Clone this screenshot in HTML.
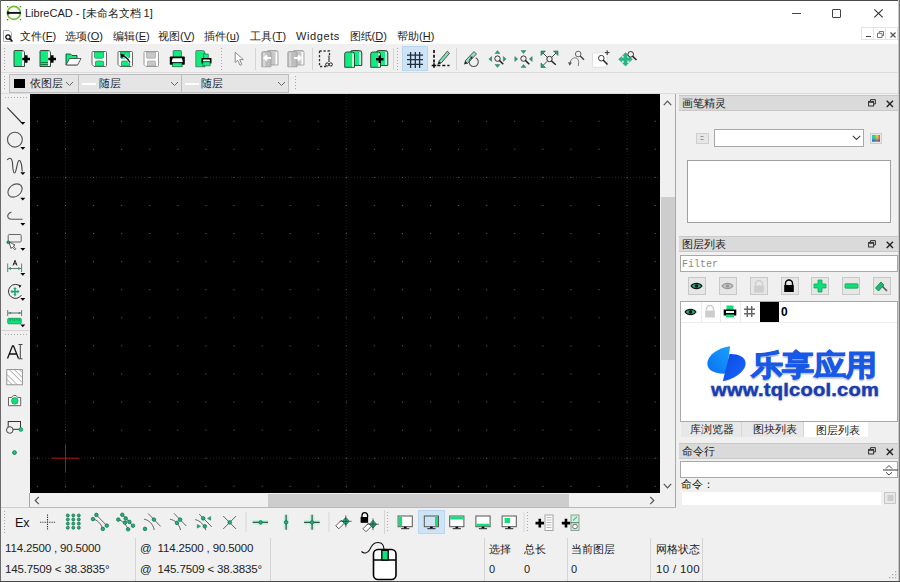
<!DOCTYPE html>
<html><head><meta charset="utf-8">
<style>
*{box-sizing:border-box}
html,body{margin:0;padding:0}
body{width:900px;height:582px;position:relative;overflow:hidden;background:#f0f0f0;font-family:"Liberation Sans",sans-serif;color:#1a1a1a}
.a{position:absolute}
.t{position:absolute;white-space:nowrap;line-height:1}
svg{position:absolute;overflow:visible}
</style></head><body>
<div class="a" style="left:0px;top:0px;width:900px;height:44px;background:#fff;"></div><svg style="left:0px;top:0px;" width="28" height="26" viewBox="0 0 28 26"><circle cx="13.9" cy="12.9" r="6.5" fill="none" stroke="#6cc230" stroke-width="1.7"/><path d="M7.2 12.9H20.8" stroke="#111" stroke-width="1.9"/><rect x="7" y="11.4" width="2.2" height="3" fill="#111"/><rect x="7" y="6" width="1.3" height="1.3" fill="#4a7a3a"/><rect x="19.8" y="6" width="1.3" height="1.3" fill="#4a7a3a"/><rect x="7" y="19" width="1.3" height="1.3" fill="#4a7a3a"/><rect x="19.8" y="19" width="1.3" height="1.3" fill="#4a7a3a"/></svg><div class="t" style="left:25px;top:7.5px;font-size:11px;color:#222;">LibreCAD - [未命名文档 1]</div><div class="a" style="left:792px;top:12.5px;width:8.5px;height:1.3px;background:#444;"></div><div class="a" style="left:832.3px;top:9px;width:9px;height:8.6px;background:transparent;border:1.1px solid #444;border-radius:1px"></div><svg style="left:874px;top:9px;" width="9" height="9" viewBox="0 0 9 9"><path d="M0.3 0.3L8.7 8.3M8.7 0.3L0.3 8.3" stroke="#333" stroke-width="1.1"/></svg><div class="a" style="left:2px;top:30px;width:12px;height:13px;background:transparent;"></div><svg style="left:2px;top:30px;" width="14" height="13" viewBox="0 0 14 13"><path d="M1.5 0.5H7L9.5 3V11.5H1.5Z" fill="#fff" stroke="#999" stroke-width="0.8"/><circle cx="6" cy="7" r="2.2" fill="none" stroke="#111" stroke-width="1.3"/><path d="M7.6 8.6L10.5 11.5" stroke="#111" stroke-width="1.6"/></svg><div class="t" style="left:20px;top:31px;font-size:11px;color:#222;">文件(<u>F</u>)</div><div class="t" style="left:65px;top:31px;font-size:11px;color:#222;">选项(<u>O</u>)</div><div class="t" style="left:113px;top:31px;font-size:11px;color:#222;">编辑(<u>E</u>)</div><div class="t" style="left:158px;top:31px;font-size:11px;color:#222;">视图(<u>V</u>)</div><div class="t" style="left:204px;top:31px;font-size:11px;color:#222;">插件(<u>u</u>)</div><div class="t" style="left:250px;top:31px;font-size:11px;color:#222;">工具(<u>T</u>)</div><div class="t" style="left:296px;top:31px;font-size:11px;color:#222;letter-spacing:0.6px;">Widgets</div><div class="t" style="left:349.5px;top:31px;font-size:11px;color:#222;">图纸(<u>D</u>)</div><div class="t" style="left:397px;top:31px;font-size:11px;color:#222;">帮助(<u>H</u>)</div><div class="a" style="left:861px;top:27px;width:12.5px;height:13px;background:#fff;border:1px solid #e3e3e3"></div><div class="a" style="left:873px;top:27px;width:12.5px;height:13px;background:#fff;border:1px solid #e3e3e3"></div><div class="a" style="left:885px;top:27px;width:12.5px;height:13px;background:#fff;border:1px solid #e3e3e3"></div><div class="a" style="left:866px;top:36px;width:5px;height:1.2px;background:#444;"></div><svg style="left:877px;top:30.5px;" width="7" height="7" viewBox="0 0 7 7"><path d="M2.3 2V0.5H6.5V4.7H5M0.5 2.3H5V6.5H0.5Z" fill="none" stroke="#666" stroke-width="0.9"/></svg><svg style="left:889.5px;top:31.5px;" width="6" height="6" viewBox="0 0 6 6"><path d="M0.5 0.5L5.5 5.5M5.5 0.5L0.5 5.5" stroke="#555" stroke-width="1.3"/></svg><div class="a" style="left:5px;top:97px;width:1px;height:1px;background:#a8a8a8;"></div><div class="a" style="left:8px;top:97px;width:1px;height:1px;background:#a8a8a8;"></div><div class="a" style="left:11px;top:97px;width:1px;height:1px;background:#a8a8a8;"></div><div class="a" style="left:14px;top:97px;width:1px;height:1px;background:#a8a8a8;"></div><div class="a" style="left:17px;top:97px;width:1px;height:1px;background:#a8a8a8;"></div><div class="a" style="left:20px;top:97px;width:1px;height:1px;background:#a8a8a8;"></div><div class="a" style="left:23px;top:97px;width:1px;height:1px;background:#a8a8a8;"></div><div class="a" style="left:26px;top:97px;width:1px;height:1px;background:#a8a8a8;"></div><svg style="left:0px;top:100px;" width="30" height="400" viewBox="0 0 30 400"><path d="M7.3 7.6L21.5 22.5" stroke="#333" stroke-width="1.1"/><path d="M20.3 22H25.3L22.8 24.8Z" fill="#000"/><circle cx="14.9" cy="39.7" r="7.4" fill="none" stroke="#555" stroke-width="1.1"/><path d="M20.3 47H25.3L22.8 49.8Z" fill="#000"/><path d="M7.2 60C9 57.5 11.5 57.3 12.3 61.5C13 66 12.5 73 14.5 73C16.5 73 17 61 19 60.5C21 60 22 66 22.2 71.5" fill="none" stroke="#444" stroke-width="1.1"/><path d="M20.3 72.2H25.3L22.8 75.0Z" fill="#000"/><ellipse cx="15" cy="90.5" rx="7.8" ry="5.8" transform="rotate(-38 15 90.5)" fill="none" stroke="#555" stroke-width="1.1"/><path d="M20.3 97.8H25.3L22.8 100.6Z" fill="#000"/><path d="M11.5 112C8.5 113 7 115.5 8 117.5C8.7 119 10 119.2 11.5 119.2H22.5" fill="none" stroke="#555" stroke-width="1.1"/><path d="M20.3 123H25.3L22.8 125.8Z" fill="#000"/><rect x="8.2" y="134.5" width="13" height="7.5" rx="1" fill="none" stroke="#666" stroke-width="1"/><path d="M9 142L11 148.5L12.3 147L14.8 149.8L15.8 148.8L13.3 146L15 145Z" fill="#fff" stroke="#333" stroke-width="0.8"/><circle cx="8.3" cy="142.2" r="1.5" fill="#1a9a6a" stroke="#116644" stroke-width="0.5"/><path d="M20.3 148H25.3L22.8 150.8Z" fill="#000"/><path d="M13 165.5L15 160.3L17 165.5M13.7 163.8H16.3" fill="none" stroke="#222" stroke-width="1"/><path d="M7.7 163.5V172M21.6 163.5V172" stroke="#777" stroke-width="1"/><path d="M8.5 168.5H20.8" stroke="#666" stroke-width="0.9"/><path d="M8 168.5L11 167V170Z M21.2 168.5L18.2 167V170Z" fill="#1e9a6a"/><path d="M20.3 173H25.3L22.8 175.8Z" fill="#000"/><path d="M20.5 186.5A7 7 0 1 0 21.5 195" fill="none" stroke="#333" stroke-width="1"/><path d="M18.5 184.5L21.5 185.5L19.5 188Z" fill="#222"/><path d="M15 187L16.8 189H15.8V190.8H17.6V189.8L19.6 191.6L17.6 193.4V192.4H15.8V194.2H16.8L15 196.2L13.2 194.2H14.2V192.4H12.4V193.4L10.4 191.6L12.4 189.8V190.8H14.2V189H13.2Z" fill="#23a677"/><path d="M20.3 198H25.3L22.8 200.8Z" fill="#000"/><path d="M7.7 210V216M21.6 210V216" stroke="#777" stroke-width="1"/><path d="M8 213H21.3" stroke="#555" stroke-width="0.9"/><circle cx="10.3" cy="213" r="1" fill="#1e9a6a"/><circle cx="19.3" cy="213" r="1" fill="#1e9a6a"/><rect x="7.7" y="218.3" width="13.6" height="5.5" rx="1" fill="#10e07a" stroke="#0a8a4a" stroke-width="0.7"/><path d="M10 219V221M12.3 219V220.5M14.6 219V221M16.9 219V220.5M19.2 219V221" stroke="#0a7a40" stroke-width="0.7"/><path d="M20.3 224.5H25.3L22.8 227.3Z" fill="#000"/><path d="M7.5 258.5L12.5 245.8H13.5L18.5 258.5M9.3 254H16.7" fill="none" stroke="#111" stroke-width="1.3"/><path d="M20.3 244.5V258.8M18.5 244.5H22.5M18.5 258.8H22.5" stroke="#444" stroke-width="1"/><rect x="6.8" y="269.6" width="15.6" height="15.2" fill="#fff" stroke="#8a8a8a" stroke-width="0.9"/><path d="M7 274.5L17.3 284.8M7 279.5L12.3 284.8M9.5 269.8L22.2 282.5M14.5 269.8L22.2 277.5M19.5 269.8L22.2 272.5" stroke="#8a8a8a" stroke-width="0.8"/><path d="M8.5 297.5H11.8L13.5 295.5H16L17.7 297.5H20.7V305.7H8.5Z" fill="#fff" stroke="#555" stroke-width="0.9"/><circle cx="14.8" cy="300.9" r="3.3" fill="#10e07a" stroke="#0a8a4a" stroke-width="0.6"/><rect x="8.2" y="321.5" width="12.3" height="7.8" fill="none" stroke="#333" stroke-width="1"/><circle cx="9.8" cy="330" r="3.3" fill="#f0f0f0" stroke="#333" stroke-width="0.9"/><circle cx="20.8" cy="329.5" r="1.9" fill="#10d07a" stroke="#0a7a4a" stroke-width="0.6"/><circle cx="14.5" cy="352.6" r="1.9" fill="#10d07a" stroke="#0a6a40" stroke-width="0.8"/></svg><div class="a" style="left:1px;top:330px;width:28px;height:1px;background:#d4d4d4;"></div><div class="a" style="left:5px;top:334px;width:1px;height:1px;background:#a8a8a8;"></div><div class="a" style="left:8px;top:334px;width:1px;height:1px;background:#a8a8a8;"></div><div class="a" style="left:11px;top:334px;width:1px;height:1px;background:#a8a8a8;"></div><div class="a" style="left:14px;top:334px;width:1px;height:1px;background:#a8a8a8;"></div><div class="a" style="left:17px;top:334px;width:1px;height:1px;background:#a8a8a8;"></div><div class="a" style="left:20px;top:334px;width:1px;height:1px;background:#a8a8a8;"></div><div class="a" style="left:23px;top:334px;width:1px;height:1px;background:#a8a8a8;"></div><div class="a" style="left:26px;top:334px;width:1px;height:1px;background:#a8a8a8;"></div><div class="a" style="left:0px;top:44px;width:900px;height:29px;background:#f0f0f0;"></div><div class="a" style="left:0px;top:72px;width:900px;height:1px;background:#dcdcdc;"></div><div class="a" style="left:4px;top:48px;width:1px;height:1px;background:#a8a8a8;"></div><div class="a" style="left:4px;top:51px;width:1px;height:1px;background:#a8a8a8;"></div><div class="a" style="left:4px;top:54px;width:1px;height:1px;background:#a8a8a8;"></div><div class="a" style="left:4px;top:57px;width:1px;height:1px;background:#a8a8a8;"></div><div class="a" style="left:4px;top:60px;width:1px;height:1px;background:#a8a8a8;"></div><div class="a" style="left:4px;top:63px;width:1px;height:1px;background:#a8a8a8;"></div><div class="a" style="left:4px;top:66px;width:1px;height:1px;background:#a8a8a8;"></div><div class="a" style="left:4px;top:69px;width:1px;height:1px;background:#a8a8a8;"></div><svg style="left:13px;top:50px;" width="18" height="18" viewBox="0 0 18 18"><path d="M1 1.5Q1 0.5 2 0.5H9Q11.5 0.5 11.5 3V16.5H1Z" fill="#10ec7e" stroke="#333" stroke-width="0.9"/><rect x="9" y="1.5" width="2" height="14.5" fill="#e8fff2"/><path d="M9.3 9H17M13.2 5.3V12.8" stroke="#000" stroke-width="2.7"/></svg><svg style="left:39px;top:50px;" width="18" height="18" viewBox="0 0 18 18"><path d="M1 1.5Q1 0.5 2 0.5H9Q11.5 0.5 11.5 3V16.5H1Z" fill="#10ec7e" stroke="#333" stroke-width="0.9"/><rect x="9" y="1.5" width="2" height="14.5" fill="#e8fff2"/><path d="M1.5 12.5H9M1.5 14.5H9" stroke="#0a7a40" stroke-width="1"/><path d="M9.3 9H17M13.2 5.3V12.8" stroke="#000" stroke-width="2.7"/></svg><svg style="left:65px;top:52px;" width="18" height="15" viewBox="0 0 18 15"><path d="M1 13V2H5.5L7 3.5H12V6.5" fill="#10ec7e" stroke="#222" stroke-width="0.8"/><path d="M1 13L4.5 6.5H16L12.5 13Z" fill="#fff" stroke="#333" stroke-width="0.8"/><path d="M1.5 13.3H12.5" stroke="#888" stroke-width="1.2"/></svg><svg style="left:91px;top:51px;" width="17" height="17" viewBox="0 0 17 17"><path d="M1 1.5Q1 0.5 2 0.5H14.5Q15.5 0.5 15.5 1.5V14.5Q15.5 15.5 14.5 15.5H3L1 13.5Z" fill="#fff" stroke="#666" stroke-width="1"/><path d="M3.5 1H12.5V6Q12.5 7.3 11.2 7.3H4.8Q3.5 7.3 3.5 6Z" fill="#10ec7e" stroke="#0a8040" stroke-width="0.6"/><path d="M4.5 15V11Q4.5 10 5.5 10H11.5Q12.5 10 12.5 11V15Z" fill="#10ec7e" stroke="#0a8040" stroke-width="0.6"/></svg><svg style="left:117px;top:51px;" width="17" height="17" viewBox="0 0 17 17"><path d="M1 1.5Q1 0.5 2 0.5H14.5Q15.5 0.5 15.5 1.5V14.5Q15.5 15.5 14.5 15.5H3L1 13.5Z" fill="#fff" stroke="#666" stroke-width="1"/><path d="M3.5 1H12.5V6Q12.5 7.3 11.2 7.3H4.8Q3.5 7.3 3.5 6Z" fill="#10ec7e" stroke="#0a8040" stroke-width="0.6"/><path d="M4.5 15V11Q4.5 10 5.5 10H11.5Q12.5 10 12.5 11V15Z" fill="#10ec7e" stroke="#0a8040" stroke-width="0.6"/></svg><svg style="left:117px;top:51px;" width="17" height="17" viewBox="0 0 17 17"><path d="M5 4.5C8 5 11 8 13 11.5" fill="none" stroke="#fff" stroke-width="2.6"/><path d="M5 4.5C8 5 11 8 13 11.5" fill="none" stroke="#111" stroke-width="1.3"/><path d="M3.5 2.5L8 3.8L4.5 7.5Z" fill="#111"/></svg><svg style="left:143px;top:51px;" width="17" height="17" viewBox="0 0 17 17"><path d="M1 1.5Q1 0.5 2 0.5H14.5Q15.5 0.5 15.5 1.5V14.5Q15.5 15.5 14.5 15.5H3L1 13.5Z" fill="#fff" stroke="#9a9a9a" stroke-width="1"/><path d="M3.5 1H12.5V6Q12.5 7.3 11.2 7.3H4.8Q3.5 7.3 3.5 6Z" fill="#c8c8c8" stroke="#999" stroke-width="0.6"/><path d="M4.5 15V11Q4.5 10 5.5 10H11.5Q12.5 10 12.5 11V15Z" fill="#c8c8c8" stroke="#999" stroke-width="0.6"/></svg><svg style="left:169px;top:50px;" width="18" height="18" viewBox="0 0 18 18"><rect x="4.2" y="0.6" width="8.2" height="7" rx="0.8" fill="#10ec7e" stroke="#1a3a2a" stroke-width="0.6"/><rect x="0.8" y="6.5" width="15" height="8.3" rx="0.8" fill="#000"/><path d="M3.6 8.2H12.9L13.8 12H2.7Z" fill="#fff"/><path d="M3.8 12.8H12.8L13.3 16.7H3.3Z" fill="#10ec7e" stroke="#1a3a2a" stroke-width="0.6"/></svg><svg style="left:195px;top:50px;" width="18" height="18" viewBox="0 0 18 18"><path d="M0.8 1.5Q0.8 0.5 1.8 0.5H7.5Q10 0.5 10 3V16.8H0.8Z" fill="#10ec7e" stroke="#555" stroke-width="0.7"/><rect x="8.7" y="4" width="4.5" height="4.5" fill="#10ec7e" stroke="#1a3a2a" stroke-width="0.5"/><rect x="6.5" y="8" width="10" height="5.5" rx="0.6" fill="#000"/><path d="M8.3 9.4H14.7L15.2 11.2H7.8Z" fill="#fff"/><path d="M8 11.6H15L15.3 15.8H7.7Z" fill="#10ec7e" stroke="#1a3a2a" stroke-width="0.5"/></svg><div class="a" style="left:221px;top:48px;width:1px;height:1px;background:#a8a8a8;"></div><div class="a" style="left:221px;top:51px;width:1px;height:1px;background:#a8a8a8;"></div><div class="a" style="left:221px;top:54px;width:1px;height:1px;background:#a8a8a8;"></div><div class="a" style="left:221px;top:57px;width:1px;height:1px;background:#a8a8a8;"></div><div class="a" style="left:221px;top:60px;width:1px;height:1px;background:#a8a8a8;"></div><div class="a" style="left:221px;top:63px;width:1px;height:1px;background:#a8a8a8;"></div><div class="a" style="left:221px;top:66px;width:1px;height:1px;background:#a8a8a8;"></div><div class="a" style="left:221px;top:69px;width:1px;height:1px;background:#a8a8a8;"></div><svg style="left:234px;top:51px;" width="12" height="16" viewBox="0 0 12 16"><path d="M1.2 1.2V11.5L3.8 9.3L6 14.3L7.8 13.4L5.7 8.6H9.3Z" fill="#fff" stroke="#808080" stroke-width="0.9"/></svg><div class="a" style="left:255px;top:48px;width:1px;height:22px;background:#d4d4d4;"></div><svg style="left:261px;top:50px;" width="18" height="18" viewBox="0 0 18 18"><path d="M6 2Q6 0.5 7.5 0.5H15Q17 0.5 17 2.5V15H6Z" fill="#c8c8c8" stroke="#9a9a9a" stroke-width="0.8"/><rect x="14.5" y="2" width="1.8" height="12.5" fill="#fff"/><path d="M0.8 3Q0.8 1.5 2.3 1.5H8.5Q10 1.5 10 3V16.8H0.8Z" fill="#bdbdbd" stroke="#9a9a9a" stroke-width="0.8"/><rect x="2" y="2.5" width="2.3" height="14" fill="#d6d6d6"/><path d="M3.5 8H10M6 5.5L3.5 8L6 10.5" stroke="#fff" stroke-width="2.2" fill="none"/></svg><svg style="left:287px;top:50px;" width="18" height="18" viewBox="0 0 18 18"><path d="M6 2Q6 0.5 7.5 0.5H15Q17 0.5 17 2.5V15H6Z" fill="#c8c8c8" stroke="#9a9a9a" stroke-width="0.8"/><rect x="14.5" y="2" width="1.8" height="12.5" fill="#fff"/><path d="M0.8 3Q0.8 1.5 2.3 1.5H8.5Q10 1.5 10 3V16.8H0.8Z" fill="#bdbdbd" stroke="#9a9a9a" stroke-width="0.8"/><rect x="2" y="2.5" width="2.3" height="14" fill="#d6d6d6"/><path d="M7 8H13.5M11 5.5L13.5 8L11 10.5" stroke="#fff" stroke-width="2.2" fill="none"/></svg><div class="a" style="left:311.5px;top:48px;width:1px;height:22px;background:#d4d4d4;"></div><svg style="left:318px;top:50px;" width="17" height="18" viewBox="0 0 17 18"><path d="M1.5 1H11.5V5M1.5 1V16.5H9" fill="none" stroke="#333" stroke-width="1.3" stroke-dasharray="2.2 1.8"/><path d="M11 6.5V12" stroke="#444" stroke-width="1.3"/><circle cx="11" cy="6.5" r="1.2" fill="#888"/><circle cx="9.2" cy="14.5" r="1.6" fill="none" stroke="#222" stroke-width="1"/><circle cx="12.8" cy="14.5" r="1.6" fill="none" stroke="#222" stroke-width="1"/></svg><svg style="left:344px;top:50px;" width="19" height="18" viewBox="0 0 19 18"><path d="M6.5 2.5Q6.5 0.5 8.5 0.5H15.5Q17.8 0.5 17.8 3V15.5H6.5Z" fill="#10ec7e" stroke="#333" stroke-width="0.9"/><rect x="15" y="2" width="1.8" height="13" fill="#e8fff2"/><path d="M0.7 4Q0.7 2 2.7 2H8.3Q10.5 2 10.5 4.5V17.3H0.7Z" fill="#10ec7e" stroke="#333" stroke-width="0.9"/><rect x="8.2" y="3.5" width="1.6" height="13.3" fill="#e8fff2"/></svg><svg style="left:370px;top:50px;" width="19" height="18" viewBox="0 0 19 18"><path d="M6.5 2.5Q6.5 0.5 8.5 0.5H15.5Q17.8 0.5 17.8 3V15.5H6.5Z" fill="#10ec7e" stroke="#333" stroke-width="0.9"/><rect x="15" y="2" width="1.8" height="13" fill="#e8fff2"/><path d="M0.7 4Q0.7 2 2.7 2H8.3Q10.5 2 10.5 4.5V17.3H0.7Z" fill="#10ec7e" stroke="#333" stroke-width="0.9"/><rect x="8.2" y="3.5" width="1.6" height="13.3" fill="#e8fff2"/><path d="M6 9.3H13.5M9.7 5.5V13" stroke="#000" stroke-width="2.4"/></svg><div class="a" style="left:393px;top:48px;width:1px;height:22px;background:#d4d4d4;"></div><div class="a" style="left:397px;top:48px;width:1px;height:1px;background:#a8a8a8;"></div><div class="a" style="left:397px;top:51px;width:1px;height:1px;background:#a8a8a8;"></div><div class="a" style="left:397px;top:54px;width:1px;height:1px;background:#a8a8a8;"></div><div class="a" style="left:397px;top:57px;width:1px;height:1px;background:#a8a8a8;"></div><div class="a" style="left:397px;top:60px;width:1px;height:1px;background:#a8a8a8;"></div><div class="a" style="left:397px;top:63px;width:1px;height:1px;background:#a8a8a8;"></div><div class="a" style="left:397px;top:66px;width:1px;height:1px;background:#a8a8a8;"></div><div class="a" style="left:397px;top:69px;width:1px;height:1px;background:#a8a8a8;"></div><div class="a" style="left:402px;top:46px;width:26px;height:25px;background:#cde3f6;border:1px solid #b8d6f0"></div><svg style="left:406px;top:51px;" width="18" height="18" viewBox="0 0 18 18"><path d="M1 4.2H17M1 8.6H17M1 13.3H17M4.6 1V17M9.3 1V17M13.6 1V17" stroke="#1f3140" stroke-width="1.3"/></svg><svg style="left:432px;top:49px;" width="19" height="19" viewBox="0 0 19 19"><path d="M2 1V13.5" stroke="#111" stroke-width="1.7" stroke-dasharray="3 1.8"/><path d="M5.3 16.5H17.5" stroke="#111" stroke-width="1.7" stroke-dasharray="3 2"/><path d="M-0.3 16.5H4.3M2 14.2V18.8" stroke="#111" stroke-width="1.7"/><path d="M6.8 12.3L15.3 2.2L17.6 4.3L9 14.3Z" fill="#7fdcb0" stroke="#222" stroke-width="0.7"/><path d="M6.8 12.3L5.3 15.8L9 14.3Z" fill="#111"/></svg><div class="a" style="left:456px;top:48px;width:1px;height:22px;background:#d4d4d4;"></div><svg style="left:462px;top:49px;" width="19" height="19" viewBox="0 0 19 19"><path d="M3 12L12 2.5L14.5 5L5.5 14.5Z" fill="#8ee0be" stroke="#222" stroke-width="0.7"/><path d="M3 12L2 15.5L5.5 14.5Z" fill="#222"/><path d="M9.6 8.8A4.6 4.6 0 1 0 13.8 8.8" fill="none" stroke="#555" stroke-width="1.1"/><path d="M8.3 7.5L11 7.8L9.3 10Z" fill="#222"/></svg><svg style="left:488px;top:50px;" width="19" height="18" viewBox="0 0 19 18"><path d="M9.5 0.6L12 3.5H7Z M9.5 17.4L7 14.5H12Z M0.8 9L3.7 6.5V11.5Z M18.2 9L15.3 6.5V11.5Z" fill="#25a275" stroke="#1a6a50" stroke-width="0.4"/><circle cx="9.5" cy="8.6" r="2.7" fill="none" stroke="#333" stroke-width="1"/><path d="M11.3 10.4L15.3 14.2" stroke="#222" stroke-width="1.5"/></svg><svg style="left:514px;top:50px;" width="19" height="18" viewBox="0 0 19 18"><path d="M9.5 3.5L7 0.6H12Z M9.5 14.5L12 17.4H7Z M3.7 9L0.8 6.5V11.5Z M15.3 9L18.2 6.5V11.5Z" fill="#25a275" stroke="#1a6a50" stroke-width="0.4"/><circle cx="9.5" cy="8.6" r="2.7" fill="none" stroke="#333" stroke-width="1"/><path d="M11.3 10.4L15.3 14.2" stroke="#222" stroke-width="1.5"/></svg><svg style="left:540px;top:50px;" width="19" height="18" viewBox="0 0 19 18"><path d="M3 3L7.3 7.3M16 3L11.7 7.3M3 15.5L7.3 11.2" stroke="#333" stroke-width="0.9"/><path d="M1 1H5.5L1 5.5Z M18 1H13.5L18 5.5Z M1 17.5H5.5L1 13Z" fill="#25a275" stroke="#1a6a50" stroke-width="0.6"/><circle cx="9.5" cy="9" r="2.7" fill="none" stroke="#333" stroke-width="1"/><path d="M11.3 10.8L15.8 14.8" stroke="#222" stroke-width="1.5"/></svg><svg style="left:567px;top:50px;" width="19" height="18" viewBox="0 0 19 18"><circle cx="11.2" cy="4" r="2.8" fill="none" stroke="#666" stroke-width="1"/><path d="M13.2 6L17 9.8" stroke="#444" stroke-width="1.5"/><path d="M3 13.5C3.5 9.5 6 7.5 8.5 7.8C11 8 12.3 11 11.3 16" fill="none" stroke="#777" stroke-width="1"/><path d="M1 12.3L5 12.6L2.7 15.8Z" fill="#555"/></svg><svg style="left:592px;top:50px;" width="19" height="19" viewBox="0 0 19 19"><rect x="0.5" y="2.8" width="14.5" height="14.5" rx="1" fill="#fff" stroke="#d8d8d8" stroke-width="0.8"/><path d="M15.2 0.3V5M12.9 2.6H17.5" stroke="#333" stroke-width="1"/><circle cx="9.3" cy="8.2" r="2.8" fill="none" stroke="#333" stroke-width="1"/><path d="M11.100000000000001 10.0L15.5 14.5" stroke="#222" stroke-width="1.5"/></svg><svg style="left:619px;top:50px;" width="19" height="18" viewBox="0 0 19 18"><path d="M6.5 2.5L9.5 5.7H8V8H10.3V6.5L13.5 9.3L10.3 12.1V10.6H8V12.9H9.5L6.5 16.1L3.5 12.9H5V10.6H2.7V12.1L-0.5 9.3L2.7 6.5V8H5V5.7H3.5Z" fill="#2ab585" stroke="#2ab585" stroke-width="0.6"/><circle cx="11.7" cy="4.3" r="2.8" fill="none" stroke="#333" stroke-width="1"/><path d="M13.5 6.1L17.5 10" stroke="#222" stroke-width="1.5"/></svg><div class="a" style="left:0px;top:73px;width:900px;height:21px;background:#f0f0f0;"></div><div class="a" style="left:0px;top:93px;width:900px;height:1px;background:#dcdcdc;"></div><div class="a" style="left:4px;top:76px;width:1px;height:1px;background:#a8a8a8;"></div><div class="a" style="left:4px;top:79px;width:1px;height:1px;background:#a8a8a8;"></div><div class="a" style="left:4px;top:82px;width:1px;height:1px;background:#a8a8a8;"></div><div class="a" style="left:4px;top:85px;width:1px;height:1px;background:#a8a8a8;"></div><div class="a" style="left:4px;top:88px;width:1px;height:1px;background:#a8a8a8;"></div><div class="a" style="left:9px;top:74px;width:70px;height:19px;background:#e5e5e5;border:1px solid #bdbdbd"></div><div class="a" style="left:78px;top:74px;width:104px;height:19px;background:#e5e5e5;border:1px solid #bdbdbd"></div><div class="a" style="left:181px;top:74px;width:108px;height:19px;background:#e5e5e5;border:1px solid #bdbdbd"></div><div class="a" style="left:14px;top:79px;width:11px;height:9px;background:#000;"></div><div class="t" style="left:30px;top:78px;font-size:11px;color:#222;">依图层</div><svg style="left:65px;top:81px;" width="9" height="6" viewBox="0 0 9 6"><path d="M1 1L4.5 4.5L8 1" fill="none" stroke="#666" stroke-width="1"/></svg><div class="a" style="left:82px;top:83px;width:14px;height:1.5px;background:#fff;"></div><div class="t" style="left:99px;top:78px;font-size:11px;color:#222;">随层</div><svg style="left:170px;top:81px;" width="9" height="6" viewBox="0 0 9 6"><path d="M1 1L4.5 4.5L8 1" fill="none" stroke="#666" stroke-width="1"/></svg><div class="a" style="left:185px;top:83px;width:14px;height:1.5px;background:#fff;"></div><div class="t" style="left:201px;top:78px;font-size:11px;color:#222;">随层</div><svg style="left:277px;top:81px;" width="9" height="6" viewBox="0 0 9 6"><path d="M1 1L4.5 4.5L8 1" fill="none" stroke="#666" stroke-width="1"/></svg><div class="a" style="left:295px;top:76px;width:1px;height:1px;background:#a8a8a8;"></div><div class="a" style="left:295px;top:79px;width:1px;height:1px;background:#a8a8a8;"></div><div class="a" style="left:295px;top:82px;width:1px;height:1px;background:#a8a8a8;"></div><div class="a" style="left:295px;top:85px;width:1px;height:1px;background:#a8a8a8;"></div><div class="a" style="left:295px;top:88px;width:1px;height:1px;background:#a8a8a8;"></div><div class="a" style="left:30px;top:94px;width:630px;height:399px;background:#000;"></div><svg style="left:30px;top:94px;overflow:hidden" width="630" height="399" viewBox="0 0 630 399"><path d="M35.50 0V399" stroke="#1e1e1e" stroke-width="1" stroke-dasharray="1 2"/><path d="M316.30 0V399" stroke="#1e1e1e" stroke-width="1" stroke-dasharray="1 2"/><path d="M597.10 0V399" stroke="#1e1e1e" stroke-width="1" stroke-dasharray="1 2"/><path d="M0 364.20H630" stroke="#262626" stroke-width="1" stroke-dasharray="1 2"/><path d="M0 83.40H630" stroke="#262626" stroke-width="1" stroke-dasharray="1 2"/><rect x="6.92" y="26.74" width="1" height="1" fill="#6a6a6a"/><rect x="6.92" y="54.82" width="1" height="1" fill="#6a6a6a"/><rect x="6.92" y="82.90" width="1" height="1" fill="#6a6a6a"/><rect x="6.92" y="110.98" width="1" height="1" fill="#6a6a6a"/><rect x="6.92" y="139.06" width="1" height="1" fill="#6a6a6a"/><rect x="6.92" y="167.14" width="1" height="1" fill="#6a6a6a"/><rect x="6.92" y="195.22" width="1" height="1" fill="#6a6a6a"/><rect x="6.92" y="223.30" width="1" height="1" fill="#6a6a6a"/><rect x="6.92" y="251.38" width="1" height="1" fill="#6a6a6a"/><rect x="6.92" y="279.46" width="1" height="1" fill="#6a6a6a"/><rect x="6.92" y="307.54" width="1" height="1" fill="#6a6a6a"/><rect x="6.92" y="335.62" width="1" height="1" fill="#6a6a6a"/><rect x="6.92" y="363.70" width="1" height="1" fill="#6a6a6a"/><rect x="6.92" y="391.78" width="1" height="1" fill="#6a6a6a"/><rect x="35.00" y="26.74" width="1" height="1" fill="#6a6a6a"/><rect x="35.00" y="54.82" width="1" height="1" fill="#6a6a6a"/><rect x="35.00" y="82.90" width="1" height="1" fill="#6a6a6a"/><rect x="35.00" y="110.98" width="1" height="1" fill="#6a6a6a"/><rect x="35.00" y="139.06" width="1" height="1" fill="#6a6a6a"/><rect x="35.00" y="167.14" width="1" height="1" fill="#6a6a6a"/><rect x="35.00" y="195.22" width="1" height="1" fill="#6a6a6a"/><rect x="35.00" y="223.30" width="1" height="1" fill="#6a6a6a"/><rect x="35.00" y="251.38" width="1" height="1" fill="#6a6a6a"/><rect x="35.00" y="279.46" width="1" height="1" fill="#6a6a6a"/><rect x="35.00" y="307.54" width="1" height="1" fill="#6a6a6a"/><rect x="35.00" y="335.62" width="1" height="1" fill="#6a6a6a"/><rect x="35.00" y="363.70" width="1" height="1" fill="#6a6a6a"/><rect x="35.00" y="391.78" width="1" height="1" fill="#6a6a6a"/><rect x="63.08" y="26.74" width="1" height="1" fill="#6a6a6a"/><rect x="63.08" y="54.82" width="1" height="1" fill="#6a6a6a"/><rect x="63.08" y="82.90" width="1" height="1" fill="#6a6a6a"/><rect x="63.08" y="110.98" width="1" height="1" fill="#6a6a6a"/><rect x="63.08" y="139.06" width="1" height="1" fill="#6a6a6a"/><rect x="63.08" y="167.14" width="1" height="1" fill="#6a6a6a"/><rect x="63.08" y="195.22" width="1" height="1" fill="#6a6a6a"/><rect x="63.08" y="223.30" width="1" height="1" fill="#6a6a6a"/><rect x="63.08" y="251.38" width="1" height="1" fill="#6a6a6a"/><rect x="63.08" y="279.46" width="1" height="1" fill="#6a6a6a"/><rect x="63.08" y="307.54" width="1" height="1" fill="#6a6a6a"/><rect x="63.08" y="335.62" width="1" height="1" fill="#6a6a6a"/><rect x="63.08" y="363.70" width="1" height="1" fill="#6a6a6a"/><rect x="63.08" y="391.78" width="1" height="1" fill="#6a6a6a"/><rect x="91.16" y="26.74" width="1" height="1" fill="#6a6a6a"/><rect x="91.16" y="54.82" width="1" height="1" fill="#6a6a6a"/><rect x="91.16" y="82.90" width="1" height="1" fill="#6a6a6a"/><rect x="91.16" y="110.98" width="1" height="1" fill="#6a6a6a"/><rect x="91.16" y="139.06" width="1" height="1" fill="#6a6a6a"/><rect x="91.16" y="167.14" width="1" height="1" fill="#6a6a6a"/><rect x="91.16" y="195.22" width="1" height="1" fill="#6a6a6a"/><rect x="91.16" y="223.30" width="1" height="1" fill="#6a6a6a"/><rect x="91.16" y="251.38" width="1" height="1" fill="#6a6a6a"/><rect x="91.16" y="279.46" width="1" height="1" fill="#6a6a6a"/><rect x="91.16" y="307.54" width="1" height="1" fill="#6a6a6a"/><rect x="91.16" y="335.62" width="1" height="1" fill="#6a6a6a"/><rect x="91.16" y="363.70" width="1" height="1" fill="#6a6a6a"/><rect x="91.16" y="391.78" width="1" height="1" fill="#6a6a6a"/><rect x="119.24" y="26.74" width="1" height="1" fill="#6a6a6a"/><rect x="119.24" y="54.82" width="1" height="1" fill="#6a6a6a"/><rect x="119.24" y="82.90" width="1" height="1" fill="#6a6a6a"/><rect x="119.24" y="110.98" width="1" height="1" fill="#6a6a6a"/><rect x="119.24" y="139.06" width="1" height="1" fill="#6a6a6a"/><rect x="119.24" y="167.14" width="1" height="1" fill="#6a6a6a"/><rect x="119.24" y="195.22" width="1" height="1" fill="#6a6a6a"/><rect x="119.24" y="223.30" width="1" height="1" fill="#6a6a6a"/><rect x="119.24" y="251.38" width="1" height="1" fill="#6a6a6a"/><rect x="119.24" y="279.46" width="1" height="1" fill="#6a6a6a"/><rect x="119.24" y="307.54" width="1" height="1" fill="#6a6a6a"/><rect x="119.24" y="335.62" width="1" height="1" fill="#6a6a6a"/><rect x="119.24" y="363.70" width="1" height="1" fill="#6a6a6a"/><rect x="119.24" y="391.78" width="1" height="1" fill="#6a6a6a"/><rect x="147.32" y="26.74" width="1" height="1" fill="#6a6a6a"/><rect x="147.32" y="54.82" width="1" height="1" fill="#6a6a6a"/><rect x="147.32" y="82.90" width="1" height="1" fill="#6a6a6a"/><rect x="147.32" y="110.98" width="1" height="1" fill="#6a6a6a"/><rect x="147.32" y="139.06" width="1" height="1" fill="#6a6a6a"/><rect x="147.32" y="167.14" width="1" height="1" fill="#6a6a6a"/><rect x="147.32" y="195.22" width="1" height="1" fill="#6a6a6a"/><rect x="147.32" y="223.30" width="1" height="1" fill="#6a6a6a"/><rect x="147.32" y="251.38" width="1" height="1" fill="#6a6a6a"/><rect x="147.32" y="279.46" width="1" height="1" fill="#6a6a6a"/><rect x="147.32" y="307.54" width="1" height="1" fill="#6a6a6a"/><rect x="147.32" y="335.62" width="1" height="1" fill="#6a6a6a"/><rect x="147.32" y="363.70" width="1" height="1" fill="#6a6a6a"/><rect x="147.32" y="391.78" width="1" height="1" fill="#6a6a6a"/><rect x="175.40" y="26.74" width="1" height="1" fill="#6a6a6a"/><rect x="175.40" y="54.82" width="1" height="1" fill="#6a6a6a"/><rect x="175.40" y="82.90" width="1" height="1" fill="#6a6a6a"/><rect x="175.40" y="110.98" width="1" height="1" fill="#6a6a6a"/><rect x="175.40" y="139.06" width="1" height="1" fill="#6a6a6a"/><rect x="175.40" y="167.14" width="1" height="1" fill="#6a6a6a"/><rect x="175.40" y="195.22" width="1" height="1" fill="#6a6a6a"/><rect x="175.40" y="223.30" width="1" height="1" fill="#6a6a6a"/><rect x="175.40" y="251.38" width="1" height="1" fill="#6a6a6a"/><rect x="175.40" y="279.46" width="1" height="1" fill="#6a6a6a"/><rect x="175.40" y="307.54" width="1" height="1" fill="#6a6a6a"/><rect x="175.40" y="335.62" width="1" height="1" fill="#6a6a6a"/><rect x="175.40" y="363.70" width="1" height="1" fill="#6a6a6a"/><rect x="175.40" y="391.78" width="1" height="1" fill="#6a6a6a"/><rect x="203.48" y="26.74" width="1" height="1" fill="#6a6a6a"/><rect x="203.48" y="54.82" width="1" height="1" fill="#6a6a6a"/><rect x="203.48" y="82.90" width="1" height="1" fill="#6a6a6a"/><rect x="203.48" y="110.98" width="1" height="1" fill="#6a6a6a"/><rect x="203.48" y="139.06" width="1" height="1" fill="#6a6a6a"/><rect x="203.48" y="167.14" width="1" height="1" fill="#6a6a6a"/><rect x="203.48" y="195.22" width="1" height="1" fill="#6a6a6a"/><rect x="203.48" y="223.30" width="1" height="1" fill="#6a6a6a"/><rect x="203.48" y="251.38" width="1" height="1" fill="#6a6a6a"/><rect x="203.48" y="279.46" width="1" height="1" fill="#6a6a6a"/><rect x="203.48" y="307.54" width="1" height="1" fill="#6a6a6a"/><rect x="203.48" y="335.62" width="1" height="1" fill="#6a6a6a"/><rect x="203.48" y="363.70" width="1" height="1" fill="#6a6a6a"/><rect x="203.48" y="391.78" width="1" height="1" fill="#6a6a6a"/><rect x="231.56" y="26.74" width="1" height="1" fill="#6a6a6a"/><rect x="231.56" y="54.82" width="1" height="1" fill="#6a6a6a"/><rect x="231.56" y="82.90" width="1" height="1" fill="#6a6a6a"/><rect x="231.56" y="110.98" width="1" height="1" fill="#6a6a6a"/><rect x="231.56" y="139.06" width="1" height="1" fill="#6a6a6a"/><rect x="231.56" y="167.14" width="1" height="1" fill="#6a6a6a"/><rect x="231.56" y="195.22" width="1" height="1" fill="#6a6a6a"/><rect x="231.56" y="223.30" width="1" height="1" fill="#6a6a6a"/><rect x="231.56" y="251.38" width="1" height="1" fill="#6a6a6a"/><rect x="231.56" y="279.46" width="1" height="1" fill="#6a6a6a"/><rect x="231.56" y="307.54" width="1" height="1" fill="#6a6a6a"/><rect x="231.56" y="335.62" width="1" height="1" fill="#6a6a6a"/><rect x="231.56" y="363.70" width="1" height="1" fill="#6a6a6a"/><rect x="231.56" y="391.78" width="1" height="1" fill="#6a6a6a"/><rect x="259.64" y="26.74" width="1" height="1" fill="#6a6a6a"/><rect x="259.64" y="54.82" width="1" height="1" fill="#6a6a6a"/><rect x="259.64" y="82.90" width="1" height="1" fill="#6a6a6a"/><rect x="259.64" y="110.98" width="1" height="1" fill="#6a6a6a"/><rect x="259.64" y="139.06" width="1" height="1" fill="#6a6a6a"/><rect x="259.64" y="167.14" width="1" height="1" fill="#6a6a6a"/><rect x="259.64" y="195.22" width="1" height="1" fill="#6a6a6a"/><rect x="259.64" y="223.30" width="1" height="1" fill="#6a6a6a"/><rect x="259.64" y="251.38" width="1" height="1" fill="#6a6a6a"/><rect x="259.64" y="279.46" width="1" height="1" fill="#6a6a6a"/><rect x="259.64" y="307.54" width="1" height="1" fill="#6a6a6a"/><rect x="259.64" y="335.62" width="1" height="1" fill="#6a6a6a"/><rect x="259.64" y="363.70" width="1" height="1" fill="#6a6a6a"/><rect x="259.64" y="391.78" width="1" height="1" fill="#6a6a6a"/><rect x="287.72" y="26.74" width="1" height="1" fill="#6a6a6a"/><rect x="287.72" y="54.82" width="1" height="1" fill="#6a6a6a"/><rect x="287.72" y="82.90" width="1" height="1" fill="#6a6a6a"/><rect x="287.72" y="110.98" width="1" height="1" fill="#6a6a6a"/><rect x="287.72" y="139.06" width="1" height="1" fill="#6a6a6a"/><rect x="287.72" y="167.14" width="1" height="1" fill="#6a6a6a"/><rect x="287.72" y="195.22" width="1" height="1" fill="#6a6a6a"/><rect x="287.72" y="223.30" width="1" height="1" fill="#6a6a6a"/><rect x="287.72" y="251.38" width="1" height="1" fill="#6a6a6a"/><rect x="287.72" y="279.46" width="1" height="1" fill="#6a6a6a"/><rect x="287.72" y="307.54" width="1" height="1" fill="#6a6a6a"/><rect x="287.72" y="335.62" width="1" height="1" fill="#6a6a6a"/><rect x="287.72" y="363.70" width="1" height="1" fill="#6a6a6a"/><rect x="287.72" y="391.78" width="1" height="1" fill="#6a6a6a"/><rect x="315.80" y="26.74" width="1" height="1" fill="#6a6a6a"/><rect x="315.80" y="54.82" width="1" height="1" fill="#6a6a6a"/><rect x="315.80" y="82.90" width="1" height="1" fill="#6a6a6a"/><rect x="315.80" y="110.98" width="1" height="1" fill="#6a6a6a"/><rect x="315.80" y="139.06" width="1" height="1" fill="#6a6a6a"/><rect x="315.80" y="167.14" width="1" height="1" fill="#6a6a6a"/><rect x="315.80" y="195.22" width="1" height="1" fill="#6a6a6a"/><rect x="315.80" y="223.30" width="1" height="1" fill="#6a6a6a"/><rect x="315.80" y="251.38" width="1" height="1" fill="#6a6a6a"/><rect x="315.80" y="279.46" width="1" height="1" fill="#6a6a6a"/><rect x="315.80" y="307.54" width="1" height="1" fill="#6a6a6a"/><rect x="315.80" y="335.62" width="1" height="1" fill="#6a6a6a"/><rect x="315.80" y="363.70" width="1" height="1" fill="#6a6a6a"/><rect x="315.80" y="391.78" width="1" height="1" fill="#6a6a6a"/><rect x="343.88" y="26.74" width="1" height="1" fill="#6a6a6a"/><rect x="343.88" y="54.82" width="1" height="1" fill="#6a6a6a"/><rect x="343.88" y="82.90" width="1" height="1" fill="#6a6a6a"/><rect x="343.88" y="110.98" width="1" height="1" fill="#6a6a6a"/><rect x="343.88" y="139.06" width="1" height="1" fill="#6a6a6a"/><rect x="343.88" y="167.14" width="1" height="1" fill="#6a6a6a"/><rect x="343.88" y="195.22" width="1" height="1" fill="#6a6a6a"/><rect x="343.88" y="223.30" width="1" height="1" fill="#6a6a6a"/><rect x="343.88" y="251.38" width="1" height="1" fill="#6a6a6a"/><rect x="343.88" y="279.46" width="1" height="1" fill="#6a6a6a"/><rect x="343.88" y="307.54" width="1" height="1" fill="#6a6a6a"/><rect x="343.88" y="335.62" width="1" height="1" fill="#6a6a6a"/><rect x="343.88" y="363.70" width="1" height="1" fill="#6a6a6a"/><rect x="343.88" y="391.78" width="1" height="1" fill="#6a6a6a"/><rect x="371.96" y="26.74" width="1" height="1" fill="#6a6a6a"/><rect x="371.96" y="54.82" width="1" height="1" fill="#6a6a6a"/><rect x="371.96" y="82.90" width="1" height="1" fill="#6a6a6a"/><rect x="371.96" y="110.98" width="1" height="1" fill="#6a6a6a"/><rect x="371.96" y="139.06" width="1" height="1" fill="#6a6a6a"/><rect x="371.96" y="167.14" width="1" height="1" fill="#6a6a6a"/><rect x="371.96" y="195.22" width="1" height="1" fill="#6a6a6a"/><rect x="371.96" y="223.30" width="1" height="1" fill="#6a6a6a"/><rect x="371.96" y="251.38" width="1" height="1" fill="#6a6a6a"/><rect x="371.96" y="279.46" width="1" height="1" fill="#6a6a6a"/><rect x="371.96" y="307.54" width="1" height="1" fill="#6a6a6a"/><rect x="371.96" y="335.62" width="1" height="1" fill="#6a6a6a"/><rect x="371.96" y="363.70" width="1" height="1" fill="#6a6a6a"/><rect x="371.96" y="391.78" width="1" height="1" fill="#6a6a6a"/><rect x="400.04" y="26.74" width="1" height="1" fill="#6a6a6a"/><rect x="400.04" y="54.82" width="1" height="1" fill="#6a6a6a"/><rect x="400.04" y="82.90" width="1" height="1" fill="#6a6a6a"/><rect x="400.04" y="110.98" width="1" height="1" fill="#6a6a6a"/><rect x="400.04" y="139.06" width="1" height="1" fill="#6a6a6a"/><rect x="400.04" y="167.14" width="1" height="1" fill="#6a6a6a"/><rect x="400.04" y="195.22" width="1" height="1" fill="#6a6a6a"/><rect x="400.04" y="223.30" width="1" height="1" fill="#6a6a6a"/><rect x="400.04" y="251.38" width="1" height="1" fill="#6a6a6a"/><rect x="400.04" y="279.46" width="1" height="1" fill="#6a6a6a"/><rect x="400.04" y="307.54" width="1" height="1" fill="#6a6a6a"/><rect x="400.04" y="335.62" width="1" height="1" fill="#6a6a6a"/><rect x="400.04" y="363.70" width="1" height="1" fill="#6a6a6a"/><rect x="400.04" y="391.78" width="1" height="1" fill="#6a6a6a"/><rect x="428.12" y="26.74" width="1" height="1" fill="#6a6a6a"/><rect x="428.12" y="54.82" width="1" height="1" fill="#6a6a6a"/><rect x="428.12" y="82.90" width="1" height="1" fill="#6a6a6a"/><rect x="428.12" y="110.98" width="1" height="1" fill="#6a6a6a"/><rect x="428.12" y="139.06" width="1" height="1" fill="#6a6a6a"/><rect x="428.12" y="167.14" width="1" height="1" fill="#6a6a6a"/><rect x="428.12" y="195.22" width="1" height="1" fill="#6a6a6a"/><rect x="428.12" y="223.30" width="1" height="1" fill="#6a6a6a"/><rect x="428.12" y="251.38" width="1" height="1" fill="#6a6a6a"/><rect x="428.12" y="279.46" width="1" height="1" fill="#6a6a6a"/><rect x="428.12" y="307.54" width="1" height="1" fill="#6a6a6a"/><rect x="428.12" y="335.62" width="1" height="1" fill="#6a6a6a"/><rect x="428.12" y="363.70" width="1" height="1" fill="#6a6a6a"/><rect x="428.12" y="391.78" width="1" height="1" fill="#6a6a6a"/><rect x="456.20" y="26.74" width="1" height="1" fill="#6a6a6a"/><rect x="456.20" y="54.82" width="1" height="1" fill="#6a6a6a"/><rect x="456.20" y="82.90" width="1" height="1" fill="#6a6a6a"/><rect x="456.20" y="110.98" width="1" height="1" fill="#6a6a6a"/><rect x="456.20" y="139.06" width="1" height="1" fill="#6a6a6a"/><rect x="456.20" y="167.14" width="1" height="1" fill="#6a6a6a"/><rect x="456.20" y="195.22" width="1" height="1" fill="#6a6a6a"/><rect x="456.20" y="223.30" width="1" height="1" fill="#6a6a6a"/><rect x="456.20" y="251.38" width="1" height="1" fill="#6a6a6a"/><rect x="456.20" y="279.46" width="1" height="1" fill="#6a6a6a"/><rect x="456.20" y="307.54" width="1" height="1" fill="#6a6a6a"/><rect x="456.20" y="335.62" width="1" height="1" fill="#6a6a6a"/><rect x="456.20" y="363.70" width="1" height="1" fill="#6a6a6a"/><rect x="456.20" y="391.78" width="1" height="1" fill="#6a6a6a"/><rect x="484.28" y="26.74" width="1" height="1" fill="#6a6a6a"/><rect x="484.28" y="54.82" width="1" height="1" fill="#6a6a6a"/><rect x="484.28" y="82.90" width="1" height="1" fill="#6a6a6a"/><rect x="484.28" y="110.98" width="1" height="1" fill="#6a6a6a"/><rect x="484.28" y="139.06" width="1" height="1" fill="#6a6a6a"/><rect x="484.28" y="167.14" width="1" height="1" fill="#6a6a6a"/><rect x="484.28" y="195.22" width="1" height="1" fill="#6a6a6a"/><rect x="484.28" y="223.30" width="1" height="1" fill="#6a6a6a"/><rect x="484.28" y="251.38" width="1" height="1" fill="#6a6a6a"/><rect x="484.28" y="279.46" width="1" height="1" fill="#6a6a6a"/><rect x="484.28" y="307.54" width="1" height="1" fill="#6a6a6a"/><rect x="484.28" y="335.62" width="1" height="1" fill="#6a6a6a"/><rect x="484.28" y="363.70" width="1" height="1" fill="#6a6a6a"/><rect x="484.28" y="391.78" width="1" height="1" fill="#6a6a6a"/><rect x="512.36" y="26.74" width="1" height="1" fill="#6a6a6a"/><rect x="512.36" y="54.82" width="1" height="1" fill="#6a6a6a"/><rect x="512.36" y="82.90" width="1" height="1" fill="#6a6a6a"/><rect x="512.36" y="110.98" width="1" height="1" fill="#6a6a6a"/><rect x="512.36" y="139.06" width="1" height="1" fill="#6a6a6a"/><rect x="512.36" y="167.14" width="1" height="1" fill="#6a6a6a"/><rect x="512.36" y="195.22" width="1" height="1" fill="#6a6a6a"/><rect x="512.36" y="223.30" width="1" height="1" fill="#6a6a6a"/><rect x="512.36" y="251.38" width="1" height="1" fill="#6a6a6a"/><rect x="512.36" y="279.46" width="1" height="1" fill="#6a6a6a"/><rect x="512.36" y="307.54" width="1" height="1" fill="#6a6a6a"/><rect x="512.36" y="335.62" width="1" height="1" fill="#6a6a6a"/><rect x="512.36" y="363.70" width="1" height="1" fill="#6a6a6a"/><rect x="512.36" y="391.78" width="1" height="1" fill="#6a6a6a"/><rect x="540.44" y="26.74" width="1" height="1" fill="#6a6a6a"/><rect x="540.44" y="54.82" width="1" height="1" fill="#6a6a6a"/><rect x="540.44" y="82.90" width="1" height="1" fill="#6a6a6a"/><rect x="540.44" y="110.98" width="1" height="1" fill="#6a6a6a"/><rect x="540.44" y="139.06" width="1" height="1" fill="#6a6a6a"/><rect x="540.44" y="167.14" width="1" height="1" fill="#6a6a6a"/><rect x="540.44" y="195.22" width="1" height="1" fill="#6a6a6a"/><rect x="540.44" y="223.30" width="1" height="1" fill="#6a6a6a"/><rect x="540.44" y="251.38" width="1" height="1" fill="#6a6a6a"/><rect x="540.44" y="279.46" width="1" height="1" fill="#6a6a6a"/><rect x="540.44" y="307.54" width="1" height="1" fill="#6a6a6a"/><rect x="540.44" y="335.62" width="1" height="1" fill="#6a6a6a"/><rect x="540.44" y="363.70" width="1" height="1" fill="#6a6a6a"/><rect x="540.44" y="391.78" width="1" height="1" fill="#6a6a6a"/><rect x="568.52" y="26.74" width="1" height="1" fill="#6a6a6a"/><rect x="568.52" y="54.82" width="1" height="1" fill="#6a6a6a"/><rect x="568.52" y="82.90" width="1" height="1" fill="#6a6a6a"/><rect x="568.52" y="110.98" width="1" height="1" fill="#6a6a6a"/><rect x="568.52" y="139.06" width="1" height="1" fill="#6a6a6a"/><rect x="568.52" y="167.14" width="1" height="1" fill="#6a6a6a"/><rect x="568.52" y="195.22" width="1" height="1" fill="#6a6a6a"/><rect x="568.52" y="223.30" width="1" height="1" fill="#6a6a6a"/><rect x="568.52" y="251.38" width="1" height="1" fill="#6a6a6a"/><rect x="568.52" y="279.46" width="1" height="1" fill="#6a6a6a"/><rect x="568.52" y="307.54" width="1" height="1" fill="#6a6a6a"/><rect x="568.52" y="335.62" width="1" height="1" fill="#6a6a6a"/><rect x="568.52" y="363.70" width="1" height="1" fill="#6a6a6a"/><rect x="568.52" y="391.78" width="1" height="1" fill="#6a6a6a"/><rect x="596.60" y="26.74" width="1" height="1" fill="#6a6a6a"/><rect x="596.60" y="54.82" width="1" height="1" fill="#6a6a6a"/><rect x="596.60" y="82.90" width="1" height="1" fill="#6a6a6a"/><rect x="596.60" y="110.98" width="1" height="1" fill="#6a6a6a"/><rect x="596.60" y="139.06" width="1" height="1" fill="#6a6a6a"/><rect x="596.60" y="167.14" width="1" height="1" fill="#6a6a6a"/><rect x="596.60" y="195.22" width="1" height="1" fill="#6a6a6a"/><rect x="596.60" y="223.30" width="1" height="1" fill="#6a6a6a"/><rect x="596.60" y="251.38" width="1" height="1" fill="#6a6a6a"/><rect x="596.60" y="279.46" width="1" height="1" fill="#6a6a6a"/><rect x="596.60" y="307.54" width="1" height="1" fill="#6a6a6a"/><rect x="596.60" y="335.62" width="1" height="1" fill="#6a6a6a"/><rect x="596.60" y="363.70" width="1" height="1" fill="#6a6a6a"/><rect x="596.60" y="391.78" width="1" height="1" fill="#6a6a6a"/><rect x="624.68" y="26.74" width="1" height="1" fill="#6a6a6a"/><rect x="624.68" y="54.82" width="1" height="1" fill="#6a6a6a"/><rect x="624.68" y="82.90" width="1" height="1" fill="#6a6a6a"/><rect x="624.68" y="110.98" width="1" height="1" fill="#6a6a6a"/><rect x="624.68" y="139.06" width="1" height="1" fill="#6a6a6a"/><rect x="624.68" y="167.14" width="1" height="1" fill="#6a6a6a"/><rect x="624.68" y="195.22" width="1" height="1" fill="#6a6a6a"/><rect x="624.68" y="223.30" width="1" height="1" fill="#6a6a6a"/><rect x="624.68" y="251.38" width="1" height="1" fill="#6a6a6a"/><rect x="624.68" y="279.46" width="1" height="1" fill="#6a6a6a"/><rect x="624.68" y="307.54" width="1" height="1" fill="#6a6a6a"/><rect x="624.68" y="335.62" width="1" height="1" fill="#6a6a6a"/><rect x="624.68" y="363.70" width="1" height="1" fill="#6a6a6a"/><rect x="624.68" y="391.78" width="1" height="1" fill="#6a6a6a"/><path d="M21.50 364.20H49.50M35.50 350.20V378.20" stroke="#b01414" stroke-width="1"/></svg><div class="a" style="left:29px;top:493px;width:632px;height:15px;background:#f0f0f0;border-left:1px solid #a8a8a8"></div><div class="a" style="left:268px;top:494px;width:301px;height:12.5px;background:#cdcdcd;"></div><svg style="left:34px;top:496px;" width="6" height="9" viewBox="0 0 6 9"><path d="M4.8 0.8L1.2 4.5L4.8 8.2" fill="none" stroke="#555" stroke-width="1.2"/></svg><svg style="left:649px;top:496px;" width="6" height="9" viewBox="0 0 6 9"><path d="M1.2 0.8L4.8 4.5L1.2 8.2" fill="none" stroke="#555" stroke-width="1.2"/></svg><div class="a" style="left:660px;top:94px;width:15px;height:399px;background:#f0f0f0;"></div><div class="a" style="left:660.5px;top:196.5px;width:14px;height:163px;background:#cdcdcd;"></div><svg style="left:663px;top:100px;" width="9" height="6" viewBox="0 0 9 6"><path d="M0.8 5.2L4.5 1.2L8.2 5.2" fill="none" stroke="#555" stroke-width="1.2"/></svg><svg style="left:663px;top:483px;" width="9" height="6" viewBox="0 0 9 6"><path d="M0.8 0.8L4.5 4.8L8.2 0.8" fill="none" stroke="#555" stroke-width="1.2"/></svg><div class="a" style="left:660px;top:493px;width:15px;height:15px;background:#f0f0f0;"></div><div class="a" style="left:674.5px;top:94px;width:1.5px;height:414px;background:#a8a8a8;"></div><div class="a" style="left:29px;top:507px;width:647px;height:1.2px;background:#b8b8b8;"></div><div class="a" style="left:1px;top:507px;width:28px;height:1px;background:#d0d0d0;"></div><div class="a" style="left:679px;top:95px;width:219px;height:16px;background:#dadada;border-top:1px solid #c8c8c8;border-bottom:1px solid #c8c8c8"></div><div class="t" style="left:682px;top:98px;font-size:11px;color:#222;">画笔精灵</div><svg style="left:868px;top:99px;" width="8" height="8" viewBox="0 0 8 8"><path d="M2.5 2V0.6H7.4V5H6" fill="none" stroke="#333" stroke-width="1"/><rect x="0.6" y="2.4" width="5" height="4.6" fill="none" stroke="#333" stroke-width="1"/><path d="M0.6 3.2H5.6" stroke="#333" stroke-width="1.2"/></svg><svg style="left:886px;top:99.5px;" width="8" height="8" viewBox="0 0 8 8"><path d="M0.7 0.7L7 7M7 0.7L0.7 7" stroke="#222" stroke-width="1.4"/></svg><div class="a" style="left:696px;top:132.5px;width:12.5px;height:11.5px;background:#e6e6e6;border:1px solid #cfcfcf"></div><svg style="left:700px;top:135px;" width="4" height="6" viewBox="0 0 4 6"><path d="M0.5 1.5H3.5M0.5 4.5H3.5" stroke="#777" stroke-width="0.8"/></svg><div class="a" style="left:714px;top:129px;width:150px;height:18px;background:#fff;border:1px solid #a8a8a8"></div><svg style="left:852px;top:135px;" width="9" height="6" viewBox="0 0 9 6"><path d="M0.8 0.8L4.5 4.5L8.2 0.8" fill="none" stroke="#444" stroke-width="1.1"/></svg><div class="a" style="left:870px;top:132.5px;width:12px;height:11.5px;background:#e8e8e8;border:1px solid #cfcfcf"></div><svg style="left:872px;top:135px;" width="8" height="6.5" viewBox="0 0 8 6.5"><defs><linearGradient id="rb" x1="0" y1="0" x2="1" y2="0"><stop offset="0" stop-color="#00c0ff"/><stop offset="0.35" stop-color="#20e040"/><stop offset="0.65" stop-color="#ffd000"/><stop offset="1" stop-color="#ff2060"/></linearGradient><linearGradient id="rb2" x1="0" y1="0" x2="0" y2="1"><stop offset="0" stop-color="#fff" stop-opacity="0"/><stop offset="1" stop-color="#2020c0" stop-opacity="0.7"/></linearGradient></defs><rect width="8" height="6.5" fill="url(#rb)"/><rect width="8" height="6.5" fill="url(#rb2)"/></svg><div class="a" style="left:687px;top:160px;width:204px;height:63px;background:#fff;border:1px solid #a0a0a0"></div><div class="a" style="left:679px;top:236px;width:219px;height:16px;background:#dadada;border-top:1px solid #c8c8c8;border-bottom:1px solid #c8c8c8"></div><div class="t" style="left:682px;top:239px;font-size:11px;color:#222;">图层列表</div><svg style="left:868px;top:240px;" width="8" height="8" viewBox="0 0 8 8"><path d="M2.5 2V0.6H7.4V5H6" fill="none" stroke="#333" stroke-width="1"/><rect x="0.6" y="2.4" width="5" height="4.6" fill="none" stroke="#333" stroke-width="1"/><path d="M0.6 3.2H5.6" stroke="#333" stroke-width="1.2"/></svg><svg style="left:886px;top:240.5px;" width="8" height="8" viewBox="0 0 8 8"><path d="M0.7 0.7L7 7M7 0.7L0.7 7" stroke="#222" stroke-width="1.4"/></svg><div class="a" style="left:680px;top:255px;width:218px;height:16.5px;background:#fff;border:1px solid #a8a8a8"></div><div class="t" style="left:682px;top:259.5px;font-size:10px;color:#8a8a8a;font-family:Liberation Mono,monospace;">Filter</div><div class="a" style="left:687.5px;top:277px;width:18px;height:18px;background:#e6e6e6;border:1px solid #c8c8c8"></div><div class="a" style="left:718.5px;top:277px;width:18px;height:18px;background:#e6e6e6;border:1px solid #c8c8c8"></div><div class="a" style="left:749.5px;top:277px;width:18px;height:18px;background:#e6e6e6;border:1px solid #c8c8c8"></div><div class="a" style="left:780.5px;top:277px;width:18px;height:18px;background:#e6e6e6;border:1px solid #c8c8c8"></div><div class="a" style="left:811px;top:277px;width:18px;height:18px;background:#e6e6e6;border:1px solid #c8c8c8"></div><div class="a" style="left:842px;top:277px;width:18px;height:18px;background:#e6e6e6;border:1px solid #c8c8c8"></div><div class="a" style="left:872.5px;top:277px;width:18px;height:18px;background:#e6e6e6;border:1px solid #c8c8c8"></div><svg style="left:690px;top:281px;" width="13" height="10" viewBox="0 0 13 10"><path d="M1 5C3.5 1.5 9.5 1.5 12 5C9.5 8.5 3.5 8.5 1 5Z" fill="#22b07a" stroke="#111" stroke-width="1.1"/><circle cx="6.5" cy="5" r="1.8" fill="#111"/></svg><svg style="left:721px;top:281px;" width="13" height="10" viewBox="0 0 13 10"><path d="M1 5C3.5 1.5 9.5 1.5 12 5C9.5 8.5 3.5 8.5 1 5Z" fill="#c4c4c4" stroke="#999" stroke-width="1.1"/><circle cx="6.5" cy="5" r="1.8" fill="#999"/></svg><svg style="left:753px;top:280px;" width="12" height="13" viewBox="0 0 12 13"><path d="M2.5 5.5V4A3.5 3.5 0 0 1 9.5 4V5.5" fill="none" stroke="#cdcdcd" stroke-width="1.4"/><rect x="1.2" y="5.5" width="9.6" height="7" fill="#cdcdcd"/></svg><svg style="left:783px;top:279px;" width="12" height="13" viewBox="0 0 12 13"><path d="M2.5 6V4.5A3.5 3.5 0 0 1 9.5 4.5V6" fill="none" stroke="#000" stroke-width="1.4"/><rect x="1.2" y="6" width="9.6" height="7" fill="#000"/></svg><svg style="left:813px;top:279px;" width="14" height="14" viewBox="0 0 14 14"><path d="M5 1H9V5H13V9H9V13H5V9H1V5H5Z" fill="#10e07a" stroke="#0a9a50" stroke-width="0.7"/></svg><svg style="left:843.5px;top:283px;" width="15" height="6" viewBox="0 0 15 6"><rect x="1" y="0.8" width="13" height="4.4" rx="0.6" fill="#10e07a" stroke="#0a9a50" stroke-width="0.7"/></svg><svg style="left:874px;top:279px;" width="15" height="14" viewBox="0 0 15 14"><path d="M1.5 9L7 3L10 6L4.5 12Z" fill="#10c070" stroke="#0a7a40" stroke-width="0.8"/><path d="M8.5 7.5L13 12" stroke="#555" stroke-width="1.6"/></svg><div class="a" style="left:680px;top:301px;width:218px;height:121px;background:#fff;border:1px solid #a8a8a8"></div><div class="a" style="left:681px;top:322px;width:216px;height:1px;background:#ececec;"></div><div class="a" style="left:700.5px;top:302px;width:1px;height:20px;background:#ececec;"></div><div class="a" style="left:719.5px;top:302px;width:1px;height:20px;background:#ececec;"></div><div class="a" style="left:739.5px;top:302px;width:1px;height:20px;background:#ececec;"></div><div class="a" style="left:759.5px;top:302px;width:1px;height:20px;background:#ececec;"></div><svg style="left:684px;top:307px;" width="13" height="10" viewBox="0 0 13 10"><path d="M1 5C3.5 1.5 9.5 1.5 12 5C9.5 8.5 3.5 8.5 1 5Z" fill="#22b07a" stroke="#111" stroke-width="1.1"/><circle cx="6.5" cy="5" r="1.8" fill="#111"/></svg><svg style="left:704px;top:305px;" width="12" height="13" viewBox="0 0 12 13"><path d="M2.5 5.5V4A3.5 3.5 0 0 1 9.5 4V5.5" fill="none" stroke="#cdcdcd" stroke-width="1.4"/><rect x="1.2" y="5.5" width="9.6" height="7" fill="#cdcdcd"/></svg><svg style="left:723px;top:305px;" width="14" height="13" viewBox="0 0 14 13"><rect x="3.5" y="0.5" width="7" height="4.5" fill="#10e07a"/><rect x="0.7" y="4.5" width="12.6" height="6" fill="#000"/><rect x="3" y="6" width="8" height="2" fill="#fff"/><rect x="3" y="9.5" width="8" height="3" fill="#10e07a"/></svg><svg style="left:743px;top:305px;" width="13" height="13" viewBox="0 0 13 13"><path d="M4.3 1V12M8.7 1V12M1 4.3H12M1 8.7H12" stroke="#666" stroke-width="1.5"/></svg><div class="a" style="left:760px;top:302px;width:19px;height:20px;background:#000;"></div><div class="t" style="left:781px;top:306px;font-size:12px;color:#000;font-weight:bold;">0</div><svg style="left:700px;top:340px;" width="50" height="45" viewBox="0 0 50 45"><defs><linearGradient id="lg1" x1="1" y1="0" x2="0" y2="1"><stop offset="0" stop-color="#1aa0ff"/><stop offset="1" stop-color="#0a70f0"/></linearGradient><linearGradient id="lg2" x1="0" y1="0" x2="1" y2="1"><stop offset="0" stop-color="#0a48e0"/><stop offset="1" stop-color="#1a68ff"/></linearGradient></defs><path d="M30.1 6.2L26.4 33.6C16 34.5 6.8 30.5 7.3 23C8 14.5 19 7.5 30.1 6.2Z" fill="url(#lg1)"/><path d="M29.5 14L22.8 41.3C35 39 45.8 31 45.6 23C45.4 16.5 37 13.5 29.5 14Z" fill="url(#lg2)"/></svg><div class="t" style="left:751px;top:350.5px;font-size:29px;color:#1858e6;font-weight:bold;-webkit-text-stroke:0.9px #1858e6;letter-spacing:-0.5px;text-shadow:0 1.5px 1.5px rgba(0,40,120,0.35);transform:scaleX(1.105);transform-origin:0 0;">乐享应用</div><div class="t" style="left:711px;top:381.5px;font-size:17.5px;color:#1a3cae;font-weight:bold;-webkit-text-stroke:0.4px #1a3cae;letter-spacing:0.2px;text-shadow:0 1px 2px rgba(0,30,100,0.3);transform:scaleX(1.15);transform-origin:0 0;">www.tqlcool.com</div><div class="a" style="left:680.5px;top:422px;width:61px;height:15px;background:#e8e8e8;border-right:1px solid #d8d8d8"></div><div class="a" style="left:741.5px;top:422px;width:62.5px;height:15px;background:#e8e8e8;border-right:1px solid #d8d8d8"></div><div class="a" style="left:804px;top:422px;width:63.5px;height:15px;background:#fff;"></div><div class="t" style="left:690px;top:424px;font-size:11px;color:#222;">库浏览器</div><div class="t" style="left:753px;top:424px;font-size:11px;color:#222;">图块列表</div><div class="t" style="left:816px;top:424.5px;font-size:11px;color:#222;">图层列表</div><div class="a" style="left:679px;top:443px;width:219px;height:16px;background:#dadada;border-top:1px solid #c8c8c8;border-bottom:1px solid #c8c8c8"></div><div class="t" style="left:682px;top:446px;font-size:11px;color:#222;">命令行</div><svg style="left:868px;top:447px;" width="8" height="8" viewBox="0 0 8 8"><path d="M2.5 2V0.6H7.4V5H6" fill="none" stroke="#333" stroke-width="1"/><rect x="0.6" y="2.4" width="5" height="4.6" fill="none" stroke="#333" stroke-width="1"/><path d="M0.6 3.2H5.6" stroke="#333" stroke-width="1.2"/></svg><svg style="left:886px;top:447.5px;" width="8" height="8" viewBox="0 0 8 8"><path d="M0.7 0.7L7 7M7 0.7L0.7 7" stroke="#222" stroke-width="1.4"/></svg><div class="a" style="left:680px;top:461px;width:218px;height:16.5px;background:#fff;border:1px solid #a8a8a8"></div><svg style="left:883px;top:464px;" width="15" height="12" viewBox="0 0 15 12"><path d="M3 4.5L6 1.5L9 4.5" fill="none" stroke="#444" stroke-width="1"/><path d="M0 6H15" stroke="#333" stroke-width="1"/><path d="M3 8.3L6 11L9 8.3" fill="none" stroke="#444" stroke-width="1"/></svg><div class="t" style="left:680.5px;top:478.5px;font-size:11px;color:#111;">命令：</div><div class="a" style="left:682px;top:492px;width:199px;height:13px;background:#fff;"></div><div class="a" style="left:884px;top:492px;width:11.5px;height:11.5px;background:#e8e8e8;border:1px solid #c8c8c8"></div><svg style="left:886.5px;top:494.5px;" width="7" height="7" viewBox="0 0 7 7"><path d="M0.5 1H6.5M0.5 3H6.5M0.5 5H6.5" stroke="#999" stroke-width="0.7"/></svg><div class="a" style="left:4px;top:511px;width:1px;height:1px;background:#a8a8a8;"></div><div class="a" style="left:4px;top:514px;width:1px;height:1px;background:#a8a8a8;"></div><div class="a" style="left:4px;top:517px;width:1px;height:1px;background:#a8a8a8;"></div><div class="a" style="left:4px;top:520px;width:1px;height:1px;background:#a8a8a8;"></div><div class="a" style="left:4px;top:523px;width:1px;height:1px;background:#a8a8a8;"></div><div class="a" style="left:4px;top:526px;width:1px;height:1px;background:#a8a8a8;"></div><div class="a" style="left:4px;top:529px;width:1px;height:1px;background:#a8a8a8;"></div><div class="a" style="left:4px;top:532px;width:1px;height:1px;background:#a8a8a8;"></div><div class="t" style="left:15px;top:517px;font-size:12.5px;color:#111;">Ex</div><div class="a" style="left:418px;top:510px;width:26.5px;height:24px;background:#cde3f6;border:1px solid #b8d6f0"></div><svg style="left:0px;top:0px;" width="900" height="582" viewBox="0 0 900 582"><path d="M40 522.3H56" stroke="#444" stroke-width="1.1" stroke-dasharray="1.3 1"/><path d="M47.5 514.5V530" stroke="#333" stroke-width="1.1" stroke-dasharray="1.3 1"/><circle cx="67.8" cy="515.4" r="1.5" fill="#20b07a" stroke="#0d6a48" stroke-width="0.7"/><circle cx="67.8" cy="519.5" r="1.5" fill="#20b07a" stroke="#0d6a48" stroke-width="0.7"/><circle cx="67.8" cy="523.6" r="1.5" fill="#20b07a" stroke="#0d6a48" stroke-width="0.7"/><circle cx="67.8" cy="527.7" r="1.5" fill="#20b07a" stroke="#0d6a48" stroke-width="0.7"/><circle cx="73.3" cy="515.4" r="1.5" fill="#20b07a" stroke="#0d6a48" stroke-width="0.7"/><circle cx="73.3" cy="519.5" r="1.5" fill="#20b07a" stroke="#0d6a48" stroke-width="0.7"/><circle cx="73.3" cy="523.6" r="1.5" fill="#20b07a" stroke="#0d6a48" stroke-width="0.7"/><circle cx="73.3" cy="527.7" r="1.5" fill="#20b07a" stroke="#0d6a48" stroke-width="0.7"/><circle cx="78.8" cy="515.4" r="1.5" fill="#20b07a" stroke="#0d6a48" stroke-width="0.7"/><circle cx="78.8" cy="519.5" r="1.5" fill="#20b07a" stroke="#0d6a48" stroke-width="0.7"/><circle cx="78.8" cy="523.6" r="1.5" fill="#20b07a" stroke="#0d6a48" stroke-width="0.7"/><circle cx="78.8" cy="527.7" r="1.5" fill="#20b07a" stroke="#0d6a48" stroke-width="0.7"/><path d="M96.4 515L106.8 525.6" stroke="#555" stroke-width="0.9"/><path d="M93 519C97 520 101 523 102.8 529" fill="none" stroke="#555" stroke-width="0.9"/><circle cx="96.4" cy="514.9" r="1.8" fill="#20b07a" stroke="#0d6a48" stroke-width="0.7"/><circle cx="93" cy="519.1" r="1.8" fill="#20b07a" stroke="#0d6a48" stroke-width="0.7"/><circle cx="106.8" cy="525.6" r="1.8" fill="#20b07a" stroke="#0d6a48" stroke-width="0.7"/><circle cx="102.8" cy="528.9" r="1.8" fill="#20b07a" stroke="#0d6a48" stroke-width="0.7"/><path d="M122.3 514.8L133 525.7" stroke="#555" stroke-width="0.9"/><path d="M118.3 519.6C122 520.5 126 524 128.1 529.3" fill="none" stroke="#555" stroke-width="0.9"/><circle cx="122.3" cy="514.8" r="1.8" fill="#20b07a" stroke="#0d6a48" stroke-width="0.7"/><circle cx="118.3" cy="519.6" r="1.8" fill="#20b07a" stroke="#0d6a48" stroke-width="0.7"/><circle cx="125.7" cy="518.4" r="1.8" fill="#20b07a" stroke="#0d6a48" stroke-width="0.7"/><circle cx="125" cy="522.6" r="1.8" fill="#20b07a" stroke="#0d6a48" stroke-width="0.7"/><circle cx="129.4" cy="521.9" r="1.8" fill="#20b07a" stroke="#0d6a48" stroke-width="0.7"/><circle cx="133" cy="525.7" r="1.8" fill="#20b07a" stroke="#0d6a48" stroke-width="0.7"/><circle cx="128.1" cy="529.3" r="1.8" fill="#20b07a" stroke="#0d6a48" stroke-width="0.7"/><path d="M144.1 519.3C149 520 153 524 154.3 530M148.1 513.5L160.6 526.4" fill="none" stroke="#555" stroke-width="0.9"/><circle cx="153.9" cy="519.6" r="1.8" fill="#20b07a" stroke="#0d6a48" stroke-width="0.7"/><circle cx="145" cy="528.9" r="1.8" fill="#20b07a" stroke="#0d6a48" stroke-width="0.7"/><path d="M169.9 519.2C175 520 179 524 180.6 530M173.9 513.3L186.3 526" fill="none" stroke="#555" stroke-width="0.9"/><circle cx="180.1" cy="519.6" r="1.8" fill="#20b07a" stroke="#0d6a48" stroke-width="0.7"/><circle cx="177" cy="522.9" r="1.8" fill="#20b07a" stroke="#0d6a48" stroke-width="0.7"/><path d="M195.2 519.6C200 520.5 204 524.5 205.9 530.2M199.2 514L211.7 526.8" fill="none" stroke="#555" stroke-width="0.9"/><circle cx="203.2" cy="518.4" r="1.8" fill="#20b07a" stroke="#0d6a48" stroke-width="0.7"/><circle cx="204.8" cy="526.3" r="1.8" fill="#20b07a" stroke="#0d6a48" stroke-width="0.7"/><path d="M207.5 518.4L210.7 516.6V520.2Z M200.5 526.3L197.3 524.5V528.1Z" fill="#20b07a" stroke="#0d6a48" stroke-width="0.5"/><path d="M223.2 516L236.1 529M236.1 516L223.2 529" stroke="#555" stroke-width="0.9"/><circle cx="229.7" cy="522.4" r="1.8" fill="#20b07a" stroke="#0d6a48" stroke-width="0.7"/><path d="M246 512V532" stroke="#d8d8d8" stroke-width="1"/><rect x="252.6" y="520" width="15.5" height="4.6" fill="#b8f5dc"/><path d="M252.6 522.3H268.1" stroke="#444" stroke-width="1.2"/><circle cx="260.6" cy="522.4" r="1.8" fill="#20b07a" stroke="#0d6a48" stroke-width="0.7"/><rect x="283.7" y="514.7" width="4.8" height="15.1" fill="#b8f5dc"/><path d="M286.1 514.7V529.8" stroke="#444" stroke-width="1.2"/><circle cx="286.1" cy="522.3" r="1.8" fill="#20b07a" stroke="#0d6a48" stroke-width="0.7"/><rect x="304.1" y="520" width="15.6" height="4.6" fill="#b8f5dc"/><rect x="309.7" y="514.7" width="4.8" height="15.1" fill="#b8f5dc"/><path d="M304.1 522.3H319.7M312.1 514.7V529.8" stroke="#444" stroke-width="1.2"/><circle cx="312.1" cy="522.3" r="1.8" fill="#20b07a" stroke="#0d6a48" stroke-width="0.7"/><path d="M329 512V532" stroke="#d8d8d8" stroke-width="1"/><path d="M335.8 525.8L341.3 520.3L344.3 523.3L338.8 528.8Z" fill="#fff" stroke="#333" stroke-width="0.8"/><path d="M345.8 517.3L349.3 521.3L345.8 525.3L342.3 521.3Z" fill="#20b07a" stroke="#0d4a30" stroke-width="0.6"/><path d="M345.8 515.3V527.3M339.8 521.3H351.8" stroke="#222" stroke-width="0.6"/><path d="M362 517V515.5A2.8 2.8 0 0 1 367.6 515.5V517" fill="none" stroke="#000" stroke-width="1.3"/><rect x="360.6" y="517" width="7.5" height="5.8" fill="#000"/><path d="M363 528.7L368.5 523.2L371.5 526.2L366 531.7Z" fill="#fff" stroke="#333" stroke-width="0.8"/><path d="M373 520.2L376.5 524.2L373 528.2L369.5 524.2Z" fill="#20b07a" stroke="#0d4a30" stroke-width="0.6"/><path d="M373 518.2V530.2M367 524.2H379" stroke="#222" stroke-width="0.6"/><rect x="398.1" y="516" width="14.2" height="10.7" fill="#fff" stroke="#555" stroke-width="1"/><rect x="398.6" y="516.5" width="3.5" height="9.7" fill="#10e07a"/><rect x="403.90000000000003" y="526.7" width="2.6" height="1.6" fill="#000"/><path d="M401.1 528.7H409.3" stroke="#222" stroke-width="1"/><rect x="424.3" y="516" width="14.2" height="10.7" fill="#d0e4f5" stroke="#555" stroke-width="1"/><rect x="435.0" y="516.5" width="3" height="9.7" fill="#10e07a"/><rect x="430.1" y="526.7" width="2.6" height="1.6" fill="#000"/><path d="M427.3 528.7H435.5" stroke="#222" stroke-width="1"/><rect x="449.7" y="516" width="14.2" height="10.7" fill="#fff" stroke="#555" stroke-width="1"/><rect x="450.2" y="516.5" width="13.2" height="3" fill="#10e07a"/><rect x="455.5" y="526.7" width="2.6" height="1.6" fill="#000"/><path d="M452.7 528.7H460.9" stroke="#222" stroke-width="1"/><rect x="475.9" y="516" width="14.2" height="10.7" fill="#fff" stroke="#555" stroke-width="1"/><rect x="476.4" y="523.7" width="13.2" height="2.5" fill="#10e07a"/><rect x="481.7" y="526.7" width="2.6" height="1.6" fill="#000"/><path d="M478.9 528.7H487.09999999999997" stroke="#222" stroke-width="1"/><rect x="502.1" y="516" width="14.2" height="10.7" fill="#fff" stroke="#555" stroke-width="1"/><rect x="504.6" y="518" width="5.5" height="5" fill="#10e07a"/><rect x="507.90000000000003" y="526.7" width="2.6" height="1.6" fill="#000"/><path d="M505.1 528.7H513.3000000000001" stroke="#222" stroke-width="1"/><path d="M524 512V532" stroke="#d8d8d8" stroke-width="1"/><path d="M535.5 523.1H544M539.8 518.8V527.4" stroke="#000" stroke-width="2.6"/><rect x="545" y="515" width="8" height="15.5" fill="#fff" stroke="#9a9a9a" stroke-width="0.9"/><path d="M546.5 517.5H551.5M546.5 520H551.5M546.5 522.5H551.5M546.5 525H551.5M546.5 527.5H551.5" stroke="#999" stroke-width="0.7"/><path d="M561.8 523.1H570.3M566 518.8V527.4" stroke="#000" stroke-width="2.6"/><rect x="571" y="515" width="8" height="15.5" fill="#c0f5dc" stroke="#8a9a90" stroke-width="0.9"/><path d="M571 522.7H579M573 520.5L577 516.8" stroke="#555" stroke-width="0.8"/><circle cx="575" cy="526.5" r="2.3" fill="#fff" stroke="#555" stroke-width="0.8"/></svg><div class="a" style="left:383.5px;top:510px;width:1px;height:24px;background:#d4d4d4;"></div><div class="a" style="left:387px;top:512px;width:1px;height:1px;background:#a8a8a8;"></div><div class="a" style="left:387px;top:515px;width:1px;height:1px;background:#a8a8a8;"></div><div class="a" style="left:387px;top:518px;width:1px;height:1px;background:#a8a8a8;"></div><div class="a" style="left:387px;top:521px;width:1px;height:1px;background:#a8a8a8;"></div><div class="a" style="left:387px;top:524px;width:1px;height:1px;background:#a8a8a8;"></div><div class="a" style="left:387px;top:527px;width:1px;height:1px;background:#a8a8a8;"></div><div class="a" style="left:387px;top:530px;width:1px;height:1px;background:#a8a8a8;"></div><div class="a" style="left:527px;top:512px;width:1px;height:1px;background:#a8a8a8;"></div><div class="a" style="left:527px;top:515px;width:1px;height:1px;background:#a8a8a8;"></div><div class="a" style="left:527px;top:518px;width:1px;height:1px;background:#a8a8a8;"></div><div class="a" style="left:527px;top:521px;width:1px;height:1px;background:#a8a8a8;"></div><div class="a" style="left:527px;top:524px;width:1px;height:1px;background:#a8a8a8;"></div><div class="a" style="left:527px;top:527px;width:1px;height:1px;background:#a8a8a8;"></div><div class="a" style="left:527px;top:530px;width:1px;height:1px;background:#a8a8a8;"></div><div class="a" style="left:135px;top:538px;width:1px;height:43px;background:#d4d4d4;"></div><div class="a" style="left:270px;top:538px;width:1px;height:43px;background:#d4d4d4;"></div><div class="a" style="left:484px;top:538px;width:1px;height:43px;background:#d4d4d4;"></div><div class="a" style="left:567px;top:538px;width:1px;height:43px;background:#d4d4d4;"></div><div class="a" style="left:650px;top:538px;width:1px;height:43px;background:#d4d4d4;"></div><div class="a" style="left:702px;top:538px;width:1px;height:43px;background:#d4d4d4;"></div><div class="t" style="left:5px;top:543px;font-size:11.5px;color:#222;letter-spacing:-0.15px;">114.2500 , 90.5000</div><div class="t" style="left:5px;top:563.5px;font-size:11.5px;color:#222;letter-spacing:-0.15px;">145.7509 &lt; 38.3835°</div><div class="t" style="left:140px;top:543px;font-size:11.5px;color:#222;letter-spacing:-0.15px;">@&nbsp; 114.2500 , 90.5000</div><div class="t" style="left:140px;top:563.5px;font-size:11.5px;color:#222;letter-spacing:-0.15px;">@&nbsp; 145.7509 &lt; 38.3835°</div><svg style="left:358px;top:540px;" width="42" height="42" viewBox="0 0 42 42"><path d="M3.5 11.5C6 14 9.5 13.5 11.5 10C13.5 6 15 2.5 20 2.5C25 2.5 25.5 6 26 9" fill="none" stroke="#111" stroke-width="1.1"/><rect x="15.5" y="9.5" width="22.5" height="30" rx="4.5" fill="#fff" stroke="#000" stroke-width="1.6"/><path d="M15.8 20H37.8" stroke="#000" stroke-width="1.5"/><rect x="23.8" y="10.3" width="6.4" height="9.7" fill="#10e07a" stroke="#000" stroke-width="1.3"/></svg><div class="t" style="left:489px;top:543.5px;font-size:11px;color:#222;">选择</div><div class="t" style="left:524px;top:543.5px;font-size:11px;color:#222;">总长</div><div class="t" style="left:570.5px;top:543.5px;font-size:11px;color:#222;">当前图层</div><div class="t" style="left:656px;top:543.5px;font-size:11px;color:#222;">网格状态</div><div class="t" style="left:489px;top:564px;font-size:11px;color:#222;">0</div><div class="t" style="left:524px;top:564px;font-size:11px;color:#222;">0</div><div class="t" style="left:571px;top:564px;font-size:11px;color:#222;">0</div><div class="t" style="left:656px;top:563.5px;font-size:11.5px;color:#222;letter-spacing:0.3px;">10 / 100</div><svg style="left:889px;top:571px;" width="9" height="9" viewBox="0 0 9 9"><rect x="6" y="0" width="1.3" height="1.3" fill="#aaa"/><rect x="3" y="3" width="1.3" height="1.3" fill="#aaa"/><rect x="6" y="3" width="1.3" height="1.3" fill="#aaa"/><rect x="0" y="6" width="1.3" height="1.3" fill="#aaa"/><rect x="3" y="6" width="1.3" height="1.3" fill="#aaa"/><rect x="6" y="6" width="1.3" height="1.3" fill="#aaa"/></svg><div class="a" style="left:0px;top:0px;width:900px;height:1px;background:#4a4a4a;"></div><div class="a" style="left:0px;top:0px;width:1px;height:582px;background:#6a6a6a;"></div><div class="a" style="left:898px;top:0px;width:1px;height:582px;background:#c8c8c8;"></div><div class="a" style="left:899px;top:0px;width:1px;height:582px;background:#7a7a7a;"></div><div class="a" style="left:0px;top:581px;width:900px;height:1px;background:#4a4a4a;"></div></body></html>
